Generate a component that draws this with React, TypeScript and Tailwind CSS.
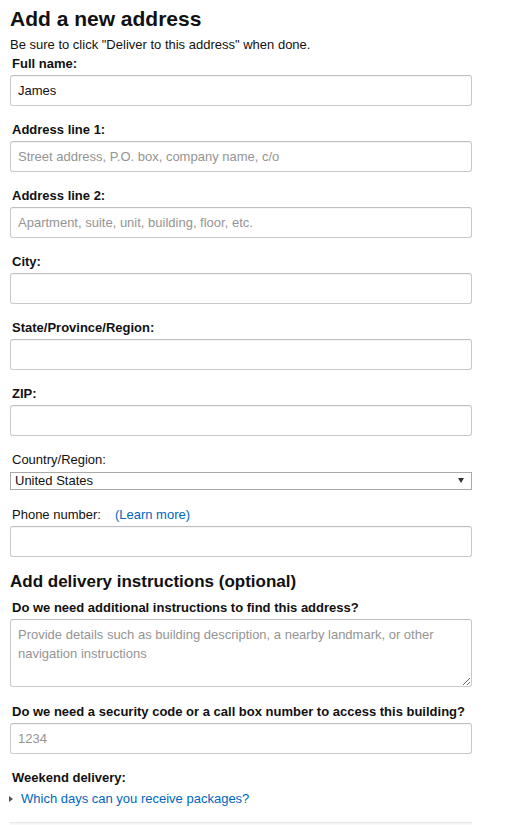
import React from "react";

const font = { fontFamily: '"Liberation Sans", Arial, sans-serif' };

function Label({ children, bold = true }: { children: React.ReactNode; bold?: boolean }) {
  return (
    <div className={`pl-[2px] pb-[2px] text-[13px] leading-[19px] text-[#111] ${bold ? "font-bold" : "font-normal"}`}>
      {children}
    </div>
  );
}

function TextInput({ value, placeholder }: { value?: string; placeholder?: string }) {
  return (
    <input
      type="text"
      defaultValue={value}
      placeholder={placeholder}
      className="block h-[31px] w-[462px] rounded-[3px] border border-[#c9c9c9] border-t-[#bdbdbd] bg-white px-[7px] text-[13px] text-[#111] placeholder:text-[#949494] outline-none shadow-[inset_0_1px_0_rgba(0,0,0,0.04)]"
      style={font}
    />
  );
}

export default function App() {
  return (
    <div className="min-h-[825px] bg-white" style={font}>
      <div className="w-[472px] pl-[10px] pt-[5px]">
        <h1 className="text-[21px] font-bold leading-[27px] text-[#111]">Add a new address</h1>
        <p className="mt-[3px] text-[13px] leading-[19px] text-[#111]">
          Be sure to click "Deliver to this address" when done.
        </p>

        <div className="mb-[14px]">
          <Label>Full name:</Label>
          <TextInput value="James" />
        </div>
        <div className="mb-[14px]">
          <Label>Address line 1:</Label>
          <TextInput placeholder="Street address, P.O. box, company name, c/o" />
        </div>
        <div className="mb-[14px]">
          <Label>Address line 2:</Label>
          <TextInput placeholder="Apartment, suite, unit, building, floor, etc." />
        </div>
        <div className="mb-[14px]">
          <Label>City:</Label>
          <TextInput />
        </div>
        <div className="mb-[14px]">
          <Label>State/Province/Region:</Label>
          <TextInput />
        </div>
        <div className="mb-[14px]">
          <Label>ZIP:</Label>
          <TextInput />
        </div>

        <div className="mb-[15px]">
          <div className="pl-[2px] pb-[3px] text-[13px] leading-[19px] text-[#111]">Country/Region:</div>
          <div className="relative h-[18px] w-[462px]">
            <select
              defaultValue="US"
              className="block h-[18px] w-[462px] appearance-none border border-[#a9a9a9] bg-white pl-[4px] text-[13px] leading-[16px] text-[#111] outline-none"
              style={font}
            >
              <option value="US">United States</option>
            </select>
            <svg
              className="pointer-events-none absolute right-[8px] top-[6px]"
              width="6"
              height="5"
              viewBox="0 0 6 5"
            >
              <path d="M0 0 H6 L3 5 Z" fill="#333" />
            </svg>
          </div>
        </div>

        <div className="mb-[14px]">
          <div className="flex pl-[2px] pb-[2px] text-[13px] leading-[19px] text-[#111]">
            <span>Phone number:</span>
            <a href="#" className="ml-[14px] text-[#0066c0]">(Learn more)</a>
          </div>
          <TextInput />
        </div>

        <h2 className="mb-[6px] text-[17px] font-bold leading-[21px] text-[#111]">
          Add delivery instructions (optional)
        </h2>

        <div className="mb-[15px]">
          <Label>Do we need additional instructions to find this address?</Label>
          <textarea
            placeholder="Provide details such as building description, a nearby landmark, or other navigation instructions"
            className="block h-[68px] w-[462px] rounded-[3px] border border-[#c9c9c9] border-t-[#bdbdbd] bg-white px-[7px] pt-[5px] text-[13px] leading-[19px] text-[#111] placeholder:text-[#949494] outline-none"
            style={font}
          />
        </div>

        <div className="mb-[14px]">
          <Label>Do we need a security code or a call box number to access this building?</Label>
          <TextInput placeholder="1234" />
        </div>

        <div>
          <Label>Weekend delivery:</Label>
          <div className="flex items-center text-[13px] leading-[19px]">
            <svg className="-ml-[1px] shrink-0" width="4" height="6" viewBox="0 0 4 6">
              <path d="M0 0 L4 3 L0 6 Z" fill="#555" />
            </svg>
            <a href="#" className="ml-[8px] text-[#0066c0]">Which days can you receive packages?</a>
          </div>
        </div>

        <div className="mt-[14px] h-[4px] w-[462px] border-t border-[#e7e7e7] bg-gradient-to-b from-[#f3f3f3] to-white" />
      </div>
    </div>
  );
}
